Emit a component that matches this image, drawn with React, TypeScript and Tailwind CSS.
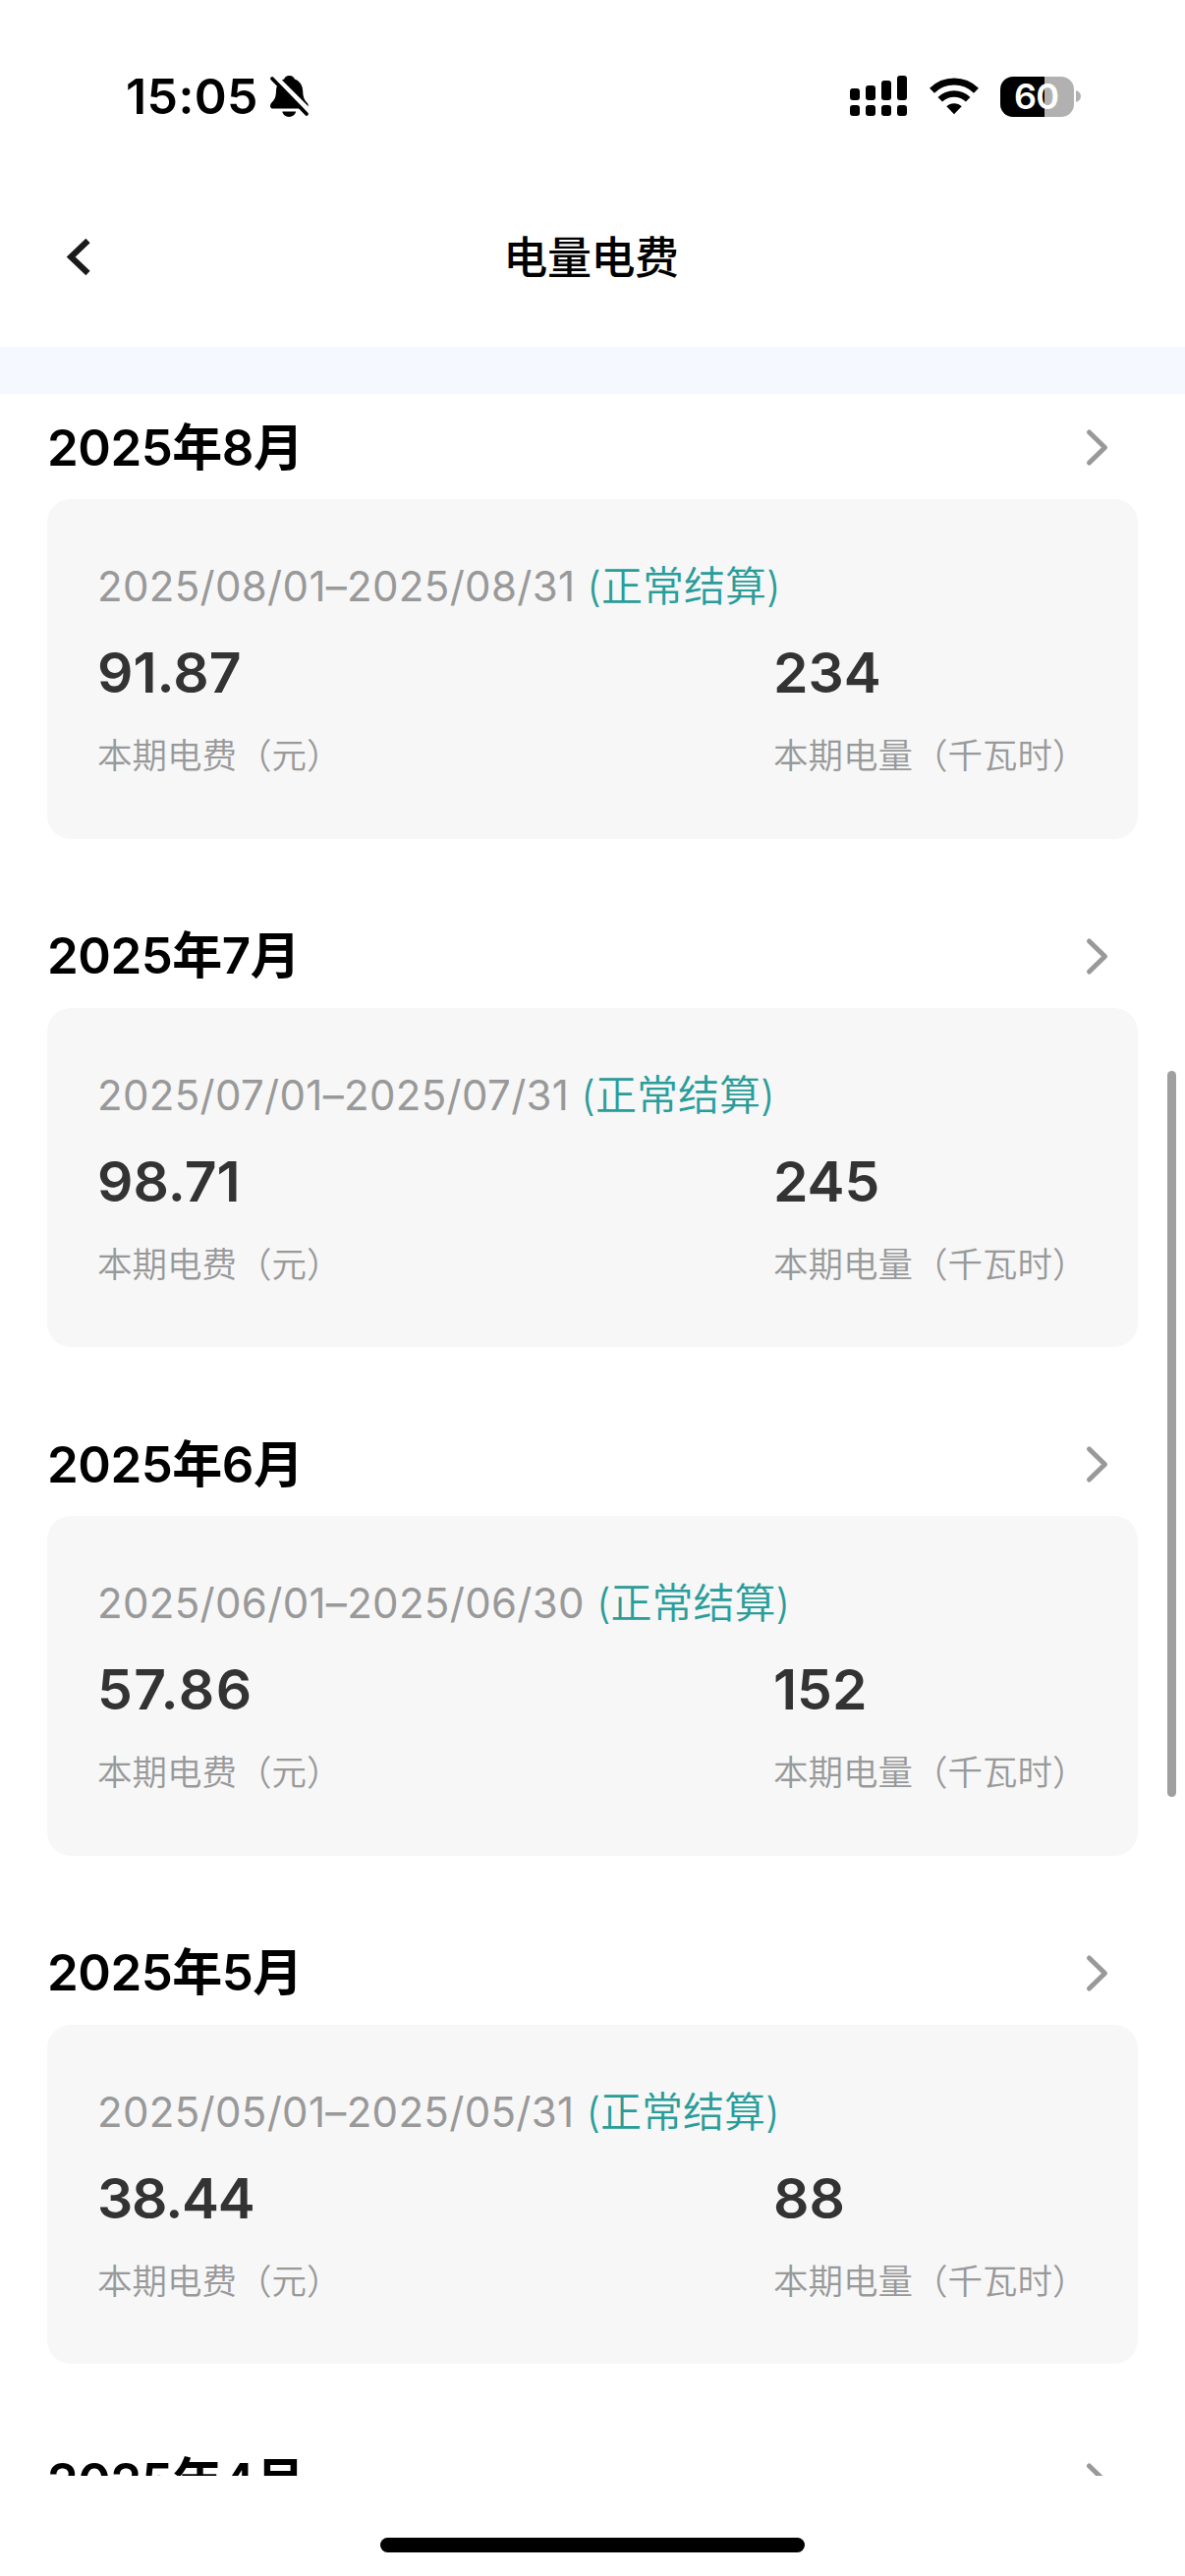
type Bill = {
  month: string
  period: string
  fee: string
  usage: string
  feeTracking: string
}

const bills: Bill[] = [
  { month: '2025年8月', period: '2025/08/01–2025/08/31', fee: '91.87', usage: '234', feeTracking: 'tracking-normal' },
  { month: '2025年7月', period: '2025/07/01–2025/07/31', fee: '98.71', usage: '245', feeTracking: 'tracking-normal' },
  { month: '2025年6月', period: '2025/06/01–2025/06/30', fee: '57.86', usage: '152', feeTracking: 'tracking-[1.5px]' },
  { month: '2025年5月', period: '2025/05/01–2025/05/31', fee: '38.44', usage: '88', feeTracking: 'tracking-[-1.2px]' },
]

function BellOffIcon() {
  return (
    <svg width="42" height="44" viewBox="0 0 42 44" fill="none">
      <path
        d="M20.5 1c3.400 0 4.800 1.900 5.300 3.400 5.200 1.900 8.200 6.300 8.400 12 .2 6.200 1.200 8.600 4 11.800 1.200 1.400 1.800 2.700 1.500 4.300-.2 1.300-1.300 2.100-2.800 2.100H4.100C2.300 34.600 1 33.700 1 32c0-2 1-3.100 2.300-4.500 2.800-3 3.500-5.700 3.700-11.100.2-5.700 3.200-10.100 8.200-12C15.700 2.900 17.100 1 20.500 1Z"
        fill="black"
      />
      <path d="M13.300 37.600h13.800c-.6 3.200-3.400 5.400-6.900 5.400s-6.300-2.200-6.900-5.400Z" fill="black" />
      <path d="M5.500 1.500 42.500 38.500" stroke="white" strokeWidth="5" />
      <path d="M1 0h9L5 9H0z" fill="white" />
      <path d="M3 4 38 40" stroke="black" strokeWidth="3.800" strokeLinecap="round" />
    </svg>
  )
}

function SignalIcon() {
  return (
    <svg width="58" height="42" viewBox="0 0 58 42" fill="black">
      <rect x="0" y="13" width="10" height="12" rx="3" />
      <rect x="16" y="10" width="10" height="15" rx="3" />
      <rect x="32" y="5" width="10" height="20" rx="3" />
      <rect x="48" y="0" width="10" height="25" rx="3" />
      <rect x="0" y="30" width="10" height="11" rx="3" />
      <rect x="16" y="30" width="10" height="11" rx="3" />
      <rect x="32" y="30" width="10" height="11" rx="3" />
      <rect x="48" y="30" width="10" height="11" rx="3" />
    </svg>
  )
}

function WifiIcon() {
  return (
    <svg width="50" height="38" viewBox="0 0 50 38" fill="none">
      <path d="M2.500 13.200a32 32 0 0 1 45 0" stroke="black" strokeWidth="7" />
      <path d="M10.800 22.200a20.300 20.300 0 0 1 28.400 0" stroke="black" strokeWidth="6.500" />
      <path d="M17.300 29.300a11 11 0 0 1 15.400 0L25 37.300Z" fill="black" />
    </svg>
  )
}

function Battery() {
  return (
    <div className="flex items-center gap-[2px]">
      <div className="flex h-[41px] w-[75px] items-center justify-center rounded-[13px] bg-[linear-gradient(90deg,#000_60%,#b1b1b1_60%)]">
        <span className="mr-[2px] text-[36px] leading-none font-semibold tracking-[-1px] text-white">60</span>
      </div>
      <svg width="5" height="12" viewBox="0 0 5 12" fill="#b1b1b1">
        <path d="M0 0c3 1 5 3.200 5 6s-2 5-5 6Z" />
      </svg>
    </div>
  )
}

function StatusBar() {
  return (
    <div className="flex h-[195px] items-start justify-between pr-[106px] pl-[128px]">
      <div className="mt-[73px] flex h-[50px] items-center">
        <span className="w-[146px] text-[50px] leading-[50px] font-semibold tracking-[0.4px]">15:05</span>
        <BellOffIcon />
      </div>
      <div className="mt-[73px] flex h-[50px] items-center">
        <SignalIcon />
        <div className="mr-[22px] ml-[23px]">
          <WifiIcon />
        </div>
        <Battery />
      </div>
    </div>
  )
}

function NavBar() {
  return (
    <div className="grid h-[158px] grid-cols-[200px_1fr_200px] items-start">
      <button type="button" className="mt-[46px] ml-[65px] h-[42px] w-[30px]">
        <svg width="30" height="42" viewBox="0 0 30 42" fill="none">
          <path d="M24.500 4 7.200 20.500 24.500 37" stroke="#1a1a1a" strokeWidth="6.200" />
        </svg>
      </button>
      <h1 className="mt-[38px] mr-[3px] text-center text-[45px] leading-[60px] font-medium tracking-[-0.4px]">电量电费</h1>
    </div>
  )
}

function MonthHeader({ month }: { month: string }) {
  return (
    <div className="flex h-[107.500px] shrink-0 items-center justify-between pr-[28px]">
      <h2 className="mt-[3px] text-[51px] leading-[60px] font-semibold tracking-[-0.5px] text-black">{month}</h2>
      <svg className="mt-[2px]" width="26" height="40" viewBox="0 0 26 40" fill="none">
        <path d="M4.500 5 20.500 20.500 4.500 36" stroke="#999999" strokeWidth="5" strokeLinecap="round" strokeLinejoin="round" />
      </svg>
    </div>
  )
}

function BillSection({ bill }: { bill: Bill }) {
  return (
    <section className="mb-[64.5px] shrink-0">
      <MonthHeader month={bill.month} />
      <div className="h-[345.500px] rounded-[24px] bg-[#f7f7f7] pt-[59px] pl-[51px]">
        <p className="flex text-[42px] leading-[60px] whitespace-nowrap text-[#999999]">
          <span className="mr-[12px] font-normal tracking-[0.32px] [font-feature-settings:'calt'_0]">{bill.period}</span>
          <span className="font-[350] text-[#2a9d9a]">(正常结算)</span>
        </p>
        <div className="mt-[23px] grid grid-cols-[688px_1fr]">
          <div>
            <p className={`text-[57px] leading-[70px] font-semibold text-[#333333] ${bill.feeTracking}`}>{bill.fee}</p>
            <p className="mt-[26px] text-[35.500px] leading-[48px] font-[350] text-[#999999]">本期电费（元）</p>
          </div>
          <div>
            <p className="text-[57px] leading-[70px] font-semibold text-[#333333]">{bill.usage}</p>
            <p className="mt-[26px] text-[35.500px] leading-[48px] font-[350] text-[#999999]">本期电量（千瓦时）</p>
          </div>
        </div>
      </div>
    </section>
  )
}

export default function App() {
  return (
    <div className="relative flex h-[2622px] w-[1206px] flex-col overflow-hidden bg-white font-['Inter','Noto_Sans_CJK_SC',sans-serif] text-black">
      <StatusBar />
      <NavBar />
      <div className="h-[47.500px] shrink-0 bg-[#f5f9ff]" />
      <main className="flex h-[2119.500px] shrink-0 flex-col overflow-hidden px-[48px]">
        {bills.map((bill) => (
          <BillSection key={bill.month} bill={bill} />
        ))}
        <MonthHeader month="2025年4月" />
      </main>
      <div className="mt-[63px] h-[15px] w-[432px] shrink-0 self-center rounded-full bg-black" />

      {/* scroll indicator */}
      <div className="absolute top-[1090px] right-[9px] h-[739px] w-[9px] rounded-full bg-[#9f9f9f]" />
    </div>
  )
}
